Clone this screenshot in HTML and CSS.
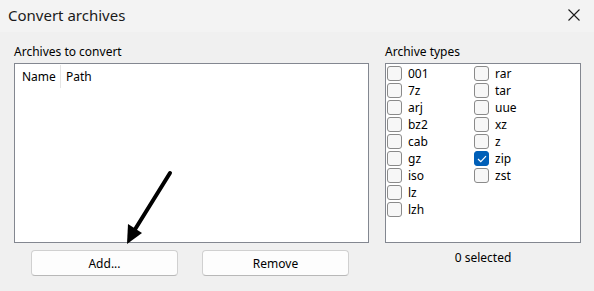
FILE: index.html
```html
<!DOCTYPE html>
<html>
<head>
<meta charset="utf-8">
<link rel="stylesheet" href="styles.css">
</head>
<body>
<div class="window">
  <div class="titlebar">
    <span class="title">Convert archives</span>
    <svg class="close" width="12" height="12" viewBox="0 0 12 12"><path d="M0.5 0.5 L11.5 11.5 M11.5 0.5 L0.5 11.5" stroke="#1a1a1a" stroke-width="1.1" fill="none"/></svg>
  </div>
  <div class="content">
    <div class="left">
      <div class="label">Archives to convert</div>
      <div class="listbox">
        <div class="header">
          <div class="col-name">Name</div>
          <div class="col-path">Path</div>
        </div>
      </div>
      <div class="buttons">
        <button class="btn">Add...</button>
        <button class="btn">Remove</button>
      </div>
    </div>
    <div class="right">
      <div class="label">Archive types</div>
      <div class="typebox">
        <div class="col">
          <label class="chk"><span class="box"></span>001</label>
          <label class="chk"><span class="box"></span>7z</label>
          <label class="chk"><span class="box"></span>arj</label>
          <label class="chk"><span class="box"></span>bz2</label>
          <label class="chk"><span class="box"></span>cab</label>
          <label class="chk"><span class="box"></span>gz</label>
          <label class="chk"><span class="box"></span>iso</label>
          <label class="chk"><span class="box"></span>lz</label>
          <label class="chk"><span class="box"></span>lzh</label>
        </div>
        <div class="col">
          <label class="chk"><span class="box"></span>rar</label>
          <label class="chk"><span class="box"></span>tar</label>
          <label class="chk"><span class="box"></span>uue</label>
          <label class="chk"><span class="box"></span>xz</label>
          <label class="chk"><span class="box"></span>z</label>
          <label class="chk"><span class="box checked"><svg width="10" height="8" viewBox="0 0 10 8"><path d="M1 4 L3.8 6.6 L9 1.2" stroke="#ffffff" stroke-width="1.2" fill="none"/></svg></span>zip</label>
          <label class="chk"><span class="box"></span>zst</label>
        </div>
      </div>
      <div class="status">0 selected</div>
    </div>
  </div>
  <svg class="arrow" width="594" height="291" viewBox="0 0 594 291">
    <line x1="170" y1="173" x2="134" y2="231" stroke="#000" stroke-width="4" stroke-linecap="round"/>
    <polygon points="127,244 128,224 142,233" fill="#000"/>
  </svg>
</div>
</body>
</html>
```

FILE: styles.css
```css
* { box-sizing: border-box; }
html, body {
  margin: 0;
  padding: 0;
  background: #f0f0f0;
}
body {
  font-family: "Noto Sans", "Open Sans", sans-serif;
  font-size: 12px;
  color: #000;
}
.window {
  position: relative;
  width: 594px;
  height: 291px;
  overflow: hidden;
}
.titlebar {
  height: 32px;
  background: #f3f3f3;
  display: flex;
  align-items: center;
  justify-content: space-between;
  padding: 0 14px 2px 8px;
}
.title {
  font-size: 15px;
  color: #1a1a1a;
}
.close { display: block; }
.content {
  display: flex;
  gap: 16px;
  padding: 10px 13px 0 14px;
}
.left { width: 355px; }
.right { width: 196px; }
.label {
  height: 21px;
  line-height: 20px;
  font-size: 12px;
}
.listbox {
  height: 180px;
  background: #fff;
  border: 1px solid #838790;
}
.header {
  display: flex;
  height: 23px;
  margin-top: 1px;
}
.col-name {
  width: 46px;
  padding-left: 7px;
  line-height: 24px;
  border-right: 1px solid #e5e5e5;
}
.col-path {
  padding-left: 5px;
  line-height: 24px;
}
.buttons {
  display: flex;
  gap: 24px;
  padding: 7px 0 0 17px;
}
.btn {
  width: 147px;
  height: 26px;
  background: #fdfdfd;
  border: 1px solid #d0d0d0;
  border-bottom-color: #b8b8b8;
  border-radius: 4px;
  font-family: inherit;
  font-size: 12px;
  color: #000;
  padding: 0;
}
.typebox {
  height: 180px;
  background: #fff;
  border: 1px solid #838790;
  display: flex;
  padding: 1px 0 0 1px;
}
.col {
  width: 87px;
  display: flex;
  flex-direction: column;
}
.chk {
  height: 17px;
  display: flex;
  align-items: center;
  gap: 6px;
  font-size: 12px;
}
.box {
  width: 15px;
  height: 15px;
  border: 1px solid #8a8a8a;
  border-radius: 3px;
  background: #f7f7f7;
  display: flex;
  align-items: center;
  justify-content: center;
}
.box.checked {
  background: #005fb8;
  border-color: #005fb8;
}
.status {
  text-align: center;
  padding-top: 6px;
  font-size: 12px;
}
.arrow {
  position: absolute;
  left: 0;
  top: 0;
  pointer-events: none;
}
```
